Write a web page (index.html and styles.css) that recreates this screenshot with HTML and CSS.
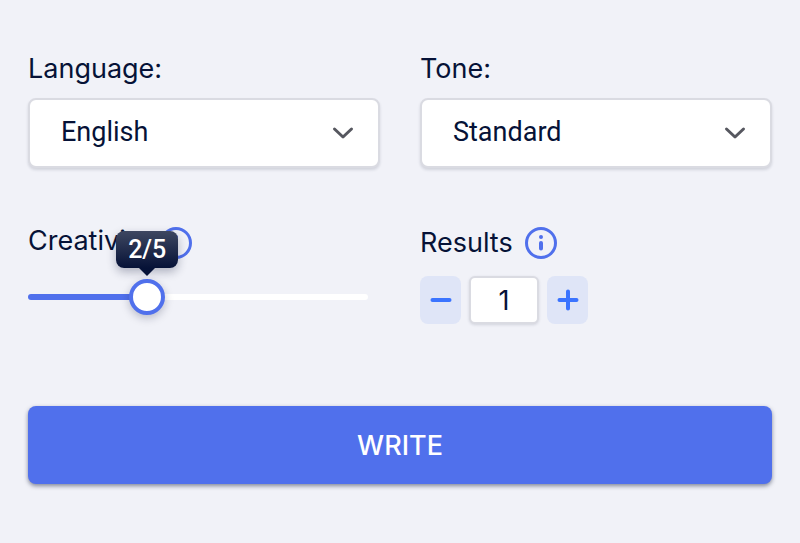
FILE: index.html
```html
<!DOCTYPE html>
<html lang="en">
  <head>
    <meta charset="UTF-8" />
    <meta name="viewport" content="width=device-width, initial-scale=1.0" />
    <title>Write</title>
    <link rel="stylesheet" href="styles.css">
  </head>
  <body>
    <form class="writer">
      <div class="options">
        <div class="field">
          <label class="label" for="language">Language:</label>
          <div class="select">
            <select id="language">
              <option>English</option>
              <option>French</option>
              <option>German</option>
            </select>
            <svg class="chevron" viewBox="0 0 22 14" aria-hidden="true"><path d="M2.5 3l8.5 8 8.5-8" /></svg>
          </div>
        </div>

        <div class="field">
          <label class="label" for="tone">Tone:</label>
          <div class="select">
            <select id="tone">
              <option>Standard</option>
              <option>Formal</option>
              <option>Friendly</option>
            </select>
            <svg class="chevron" viewBox="0 0 22 14" aria-hidden="true"><path d="M2.5 3l8.5 8 8.5-8" /></svg>
          </div>
        </div>

        <div class="field">
          <div class="label-row label-row-creativity">
            <label class="label" for="creativity">Creativity</label>
            <svg class="info" viewBox="0 0 32 32" aria-hidden="true">
              <circle cx="16" cy="16" r="14.5" />
              <path d="M16 16v5.5M16 9.9v.1" />
            </svg>
          </div>
          <div class="slider">
            <input type="range" id="creativity" min="1" max="4" value="2">
            <output class="tooltip" for="creativity">2/5</output>
          </div>
        </div>

        <div class="field">
          <div class="label-row">
            <label class="label" for="results">Results</label>
            <svg class="info" viewBox="0 0 32 32" aria-hidden="true">
              <circle cx="16" cy="16" r="14.5" />
              <path d="M16 16v5.5M16 9.9v.1" />
            </svg>
          </div>
          <div class="stepper">
            <button type="button" class="step" aria-label="Fewer results">
              <svg viewBox="0 0 22 22" aria-hidden="true"><path d="M2.5 11h17" /></svg>
            </button>
            <input type="text" id="results" inputmode="numeric" value="1">
            <button type="button" class="step" aria-label="More results">
              <svg viewBox="0 0 22 22" aria-hidden="true"><path d="M2.5 11h17M11 2.5v17" /></svg>
            </button>
          </div>
        </div>
      </div>

      <button type="button" class="write">WRITE</button>
    </form>
  </body>
</html>
```

FILE: styles.css
```css
* {
  box-sizing: border-box;
}
body {
  margin: 0;
  background: #f1f2f8;
  color: #061237;
  font-family: Inter, sans-serif;
}
.writer {
  padding: 50px 28px;
}
.options {
  display: grid;
  grid-template-columns: 1fr 1fr;
  gap: 56px 40px;
}
.label {
  font-size: 27px;
  line-height: 38px;
  font-weight: 400;
}
.field > .label {
  display: block;
  margin-bottom: 10px;
}

/* Drop-downs */
.select {
  display: grid;
  align-items: center;
}
.select select,
.chevron {
  grid-area: 1 / 1;
}
.select select {
  appearance: none;
  width: 100%;
  height: 70px;
  padding: 0 64px 2px 31px;
  border: 2px solid #dadbe2;
  border-radius: 8px;
  background: #fff;
  box-shadow: 0 2px 3px rgba(20, 25, 60, 0.14);
  color: #061237;
  font-family: Roboto, sans-serif;
  font-size: 27px;
}
.chevron {
  justify-self: end;
  width: 22px;
  height: 14px;
  margin-right: 26px;
  fill: none;
  stroke: #56575f;
  stroke-width: 3;
  stroke-linecap: round;
  stroke-linejoin: round;
  pointer-events: none;
}

/* Labels with an info icon */
.label-row {
  display: flex;
  align-items: center;
  gap: 12px;
  height: 38px;
}
.label-row-creativity {
  gap: 10px;
}
.label-row-creativity .label {
  padding-bottom: 4px;
}
.info {
  width: 32px;
  height: 32px;
  fill: none;
  stroke: #5070ec;
  stroke-width: 3;
}
.info path {
  stroke-width: 4;
  stroke-linecap: round;
}

/* Creativity slider */
.slider {
  --at: 33.3%;
  position: relative;
  width: calc(100% - 12px);
  margin-top: 16px;
}
.slider input {
  appearance: none;
  display: block;
  width: 100%;
  height: 38px;
  margin: 0;
  background: none;
}
.slider input::-webkit-slider-runnable-track {
  height: 6px;
  border-radius: 3px;
  background: linear-gradient(to right, #5070ec var(--at), #fff var(--at));
}
.slider input::-webkit-slider-thumb {
  appearance: none;
  width: 36px;
  height: 36px;
  margin-top: -15px;
  border: 4px solid #5070ec;
  border-radius: 50%;
  background: #fff;
  box-shadow: 0 3px 8px rgba(20, 25, 60, 0.25);
}
.tooltip {
  position: absolute;
  bottom: 48px;
  left: calc(var(--at) + 6px);
  width: 62px;
  transform: translateX(-50%);
  border-radius: 8px;
  background: linear-gradient(#3e4761, #061237);
  box-shadow: 0 4px 10px rgba(20, 25, 60, 0.3);
  color: #fff;
  font-family: Roboto, sans-serif;
  font-size: 25px;
  font-weight: 500;
  line-height: 37px;
  text-align: center;
}
.tooltip::after {
  content: "";
  position: absolute;
  top: 100%;
  left: 50%;
  transform: translateX(-50%);
  border: 8px solid transparent;
  border-top-color: #061237;
  border-bottom: 0;
}

/* Results stepper */
.stepper {
  display: flex;
  gap: 8px;
  margin-top: 14px;
}
.stepper input {
  width: 70px;
  height: 48px;
  padding: 0;
  border: 2px solid #dadbe2;
  border-radius: 6px;
  background: #fff;
  box-shadow: 0 1px 3px rgba(20, 25, 60, 0.14);
  color: #061237;
  font-family: Inter, sans-serif;
  font-size: 27px;
  text-align: center;
}
.step {
  display: grid;
  place-items: center;
  width: 41px;
  height: 48px;
  padding: 0;
  border: 0;
  border-radius: 8px;
  background: #dfe5f7;
}
.step svg {
  width: 22px;
  height: 22px;
  fill: none;
  stroke: #3b74ff;
  stroke-width: 4;
  stroke-linecap: round;
}

.write {
  display: block;
  width: 100%;
  height: 78px;
  margin-top: 82px;
  padding: 0;
  border: 0;
  border-radius: 8px;
  background: #5070ec;
  box-shadow: 0 2px 4px rgba(20, 30, 60, 0.5);
  color: #fff;
  font-family: Inter, sans-serif;
  font-size: 27px;
  font-weight: 500;
}
```
